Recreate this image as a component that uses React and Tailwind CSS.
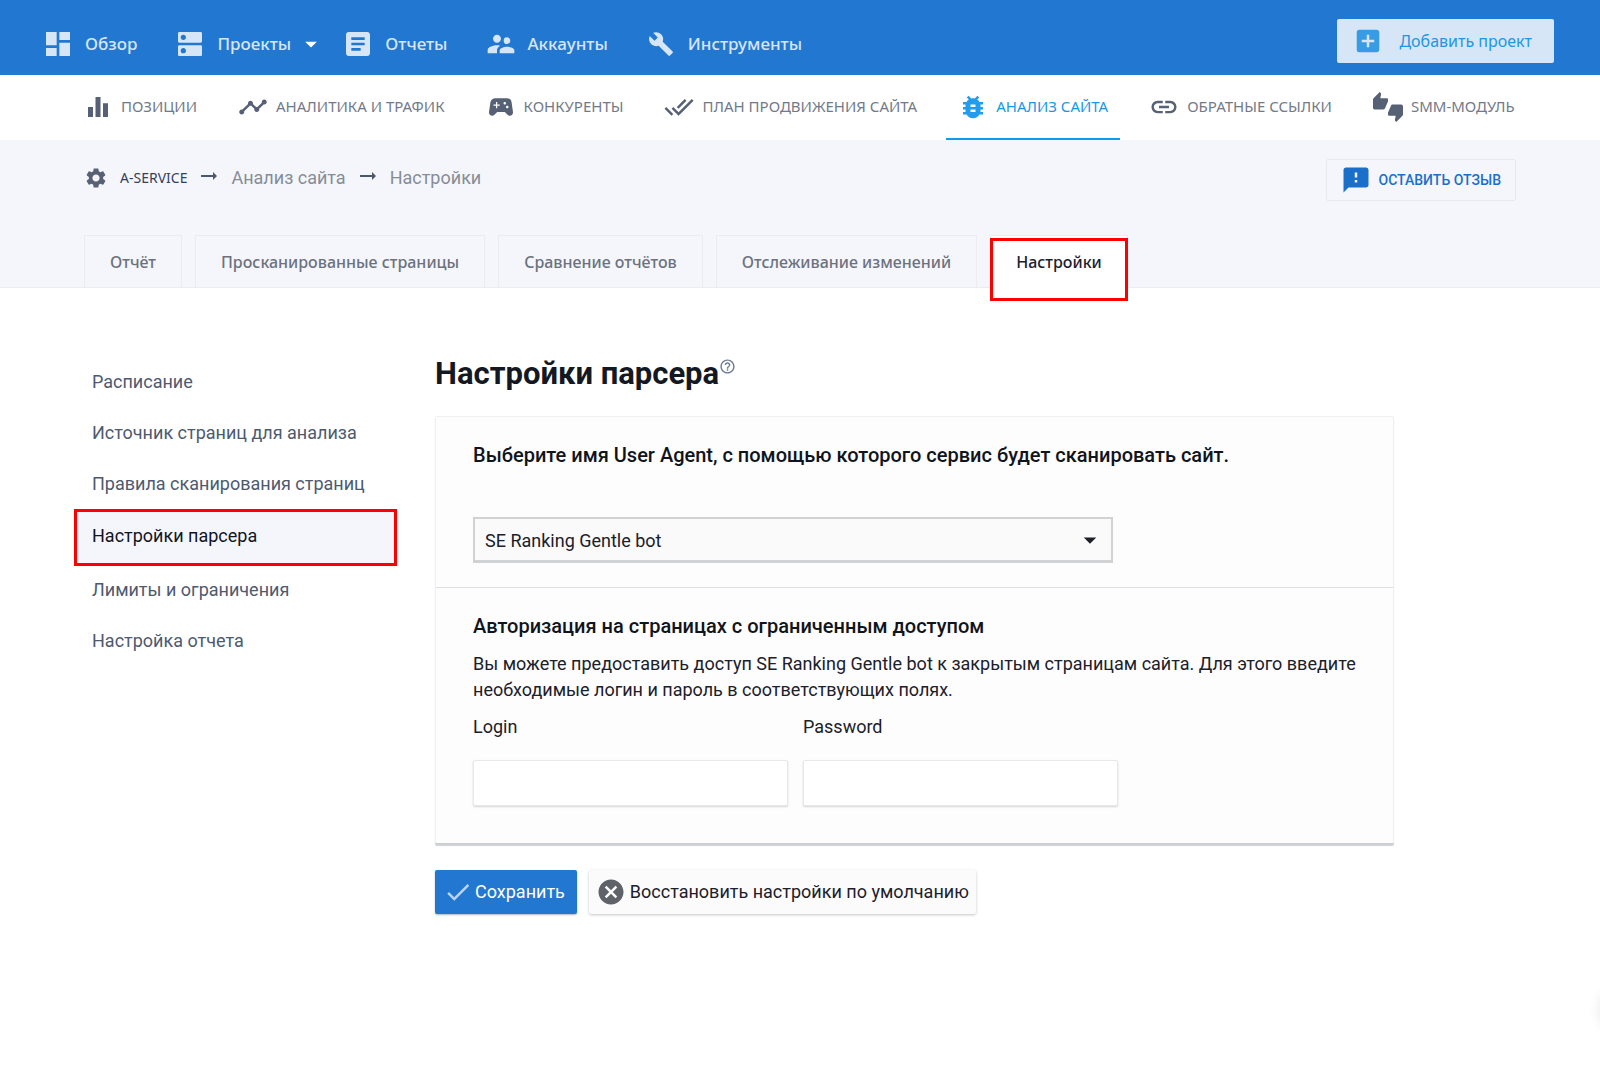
import { useState } from "react";
import {
  MdAddBox,
  MdArrowDropDown,
  MdArrowRightAlt,
  MdArticle,
  MdBugReport,
  MdBuild,
  MdCancel,
  MdDashboard,
  MdDns,
  MdDone,
  MdDoneAll,
  MdEqualizer,
  MdFeedback,
  MdHelpOutline,
  MdLink,
  MdSettings,
  MdSportsEsports,
  MdSupervisorAccount,
  MdThumbsUpDown,
  MdTimeline,
} from "react-icons/md";

const mainLinks = [
  { label: "Обзор", icon: MdDashboard },
  { label: "Проекты", icon: MdDns, dropdown: true },
  { label: "Отчеты", icon: MdArticle },
  { label: "Аккаунты", icon: MdSupervisorAccount },
  { label: "Инструменты", icon: MdBuild, small: true },
];

const sections = [
  { label: "ПОЗИЦИИ", icon: MdEqualizer },
  { label: "АНАЛИТИКА И ТРАФИК", icon: MdTimeline },
  { label: "КОНКУРЕНТЫ", icon: MdSportsEsports },
  { label: "ПЛАН ПРОДВИЖЕНИЯ САЙТА", icon: MdDoneAll },
  { label: "АНАЛИЗ САЙТА", icon: MdBugReport, active: true },
  { label: "ОБРАТНЫЕ ССЫЛКИ", icon: MdLink },
  { label: "SMM-МОДУЛЬ", icon: MdThumbsUpDown },
];

const tabs = [
  "Отчёт",
  "Просканированные страницы",
  "Сравнение отчётов",
  "Отслеживание изменений",
  "Настройки",
];

const menu = [
  "Расписание",
  "Источник страниц для анализа",
  "Правила сканирования страниц",
  "Настройки парсера",
  "Лимиты и ограничения",
  "Настройка отчета",
];

const TopBar = () => (
  <header className="flex h-[75px] items-center justify-between bg-[#2277d0] pt-3 pr-[46px] pl-[42px] font-['Noto_Sans',sans-serif]">
    <nav className="flex items-center gap-[37px]">
      {mainLinks.map(({ label, icon: Icon, dropdown, small }) => (
        <a key={label} href="#" className="flex items-center text-[17px] font-medium text-[#d6e6f7]">
          <Icon className={`mr-[11px] size-8 ${small ? "p-[3px]" : ""}`} />
          {label}
          {dropdown && <MdArrowDropDown className="-mr-5 ml-1.5 size-7 text-white" />}
        </a>
      ))}
    </nav>
    <button className="mb-[6px] flex h-11 items-center gap-4 rounded-xs bg-[#d6e6f6] pr-[22px] pl-4 text-base text-[#2196e3]">
      <MdAddBox className="size-[30px] text-[#379ce3]" />
      Добавить проект
    </button>
  </header>
);

const SectionNav = () => (
  <nav className="flex h-[65px] gap-[17px] bg-white px-[71px] font-['Noto_Sans',sans-serif]">
    {sections.map(({ label, icon: Icon, active }) => (
      <a
        key={label}
        href="#"
        className={`flex items-center gap-2 border-b-2 px-3 text-[15px] whitespace-nowrap ${
          active ? "border-[#0f9aee] text-[#1a97e6]" : "border-transparent text-[#727a8a]"
        }`}
      >
        <Icon className={`size-[30px] ${active ? "text-[#229ceb]" : "text-[#566176]"}`} />
        {label}
      </a>
    ))}
  </nav>
);

const PageHead = ({ tab, onTab }) => (
  <div className="border-b border-[#ececee] bg-[#f5f6fb] px-[84px] pt-[19px]">
    <div className="flex h-[42px] items-center justify-between">
      <div className="flex items-center pb-1 text-lg text-[#868d98]">
        <MdSettings className="mr-3 size-6 text-[#566176]" />
        <a href="#" className="font-['Noto_Sans',sans-serif] text-sm text-[#34415a]">A-SERVICE</a>
        <MdArrowRightAlt className="mx-2.5 mb-1 size-6 text-[#4c586e]" />
        <a href="#">Анализ сайта</a>
        <MdArrowRightAlt className="mx-2.5 mb-1 size-6 text-[#4c586e]" />
        <span>Настройки</span>
      </div>
      <button className="flex h-[42px] items-center gap-2 rounded-xs border border-[#e8e9ed] px-3.5 text-sm font-medium text-[#1a6fcb]">
        <MdFeedback className="size-[30px]" />
        ОСТАВИТЬ ОТЗЫВ
      </button>
    </div>
    <div className="mt-[34px] flex h-[52px] gap-[13px] font-['Noto_Sans',sans-serif]">
      {tabs.map((name) => (
        <button
          key={name}
          onClick={() => onTab(name)}
          className={`relative border border-b-0 border-[#ececee] px-[25px] text-base font-medium ${
            name === tab ? "h-[53px] bg-white text-[#1b2130]" : "h-[52px] text-[#6b727e]"
          }`}
        >
          {name}
          {name === tab && (
            <span className="absolute -inset-x-px top-0.5 -bottom-[13px] border-3 border-[#ff0000]" />
          )}
        </button>
      ))}
    </div>
  </div>
);

const SideMenu = ({ current, onSelect }) => (
  <nav className="w-[323px] shrink-0 text-lg">
    {menu.map((item) => (
      <a
        key={item}
        href="#"
        onClick={() => onSelect(item)}
        className={
          item === current
            ? "-mb-0.5 flex h-[57px] items-center border-3 border-[#ff0000] bg-[#f5f6fb] pb-1 pl-[15px] text-[#10151f]"
            : "flex h-[51px] items-center pl-[18px] text-[#4d5a70]"
        }
      >
        {item}
      </a>
    ))}
  </nav>
);

const ParserForm = () => (
  <form className="max-w-[959px] flex-1 text-[#1b202a]" onSubmit={(e) => e.preventDefault()}>
    <h1 className="flex text-[31px] leading-9 font-bold text-[#141823]">
      Настройки парсера
      <MdHelpOutline className="mt-0.5 size-[17px] text-[#6b7a92]" />
    </h1>

    <div className="mt-6 rounded-xs border border-[#f0f0f1] border-b-[#c9ccd0] bg-[#fdfdfd] shadow-[0_2px_1px_#cfd1d4]">
      <section className="border-b border-[#dcdfe6] px-[37px] pt-6 pb-6">
        <label htmlFor="agent" className="block text-xl leading-7 font-medium text-[#10141c]">
          Выберите имя User Agent, с помощью которого сервис будет сканировать сайт.
        </label>
        <div className="relative mt-12 w-[640px]">
          <select
            id="agent"
            className="h-[46px] w-full appearance-none border-2 border-[#d0d2d3] border-b-3 bg-[#fafafa] px-2.5 pt-[3px] text-lg"
          >
            <option>SE Ranking Gentle bot</option>
          </select>
          <MdArrowDropDown className="pointer-events-none absolute top-2 right-2 size-[30px]" />
        </div>
      </section>

      <section className="px-[37px] pt-6 pb-[37px]">
        <h2 className="text-xl leading-7 font-medium text-[#10141c]">
          Авторизация на страницах с ограниченным доступом
        </h2>
        <p className="mt-[11px] text-lg leading-[26px]">
          Вы можете предоставить доступ SE Ranking Gentle bot к закрытым страницам сайта. Для этого введите
          необходимые логин и пароль в соответствующих полях.
        </p>
        <div className="mt-[11px] flex gap-[15px] text-lg leading-[26px]">
          <div className="w-[315px]">
            <label htmlFor="login">Login</label>
            <input
              id="login"
              type="text"
              className="mt-5 block h-[46px] w-full rounded-xs border border-[#e8e8ea] bg-white px-3 shadow-[0_1px_2px_#d4d4d6]"
            />
          </div>
          <div className="w-[315px]">
            <label htmlFor="password">Password</label>
            <input
              id="password"
              type="password"
              className="mt-5 block h-[46px] w-full rounded-xs border border-[#e8e8ea] bg-white px-3 shadow-[0_1px_2px_#d4d4d6]"
            />
          </div>
        </div>
      </section>
    </div>

    <div className="mt-[26px] flex gap-3 text-lg">
      <button
        type="submit"
        className="flex h-11 items-center gap-0.5 rounded-xs bg-[#2277d0] pr-3 pl-2 text-white shadow-[0_1px_2px_#a9b8c9]"
      >
        <MdDone className="size-[30px] text-[#b9d4f2]" />
        Сохранить
      </button>
      <button
        type="button"
        className="flex h-11 items-center gap-1 rounded-xs bg-[#fbfbfb] px-[7px] shadow-[0_1px_3px_#c4c6c9]"
      >
        <MdCancel className="size-[30px] text-[#5f6369]" />
        Восстановить настройки по умолчанию
      </button>
    </div>
  </form>
);

const App = () => {
  const [tab, setTab] = useState("Настройки");
  const [item, setItem] = useState("Настройки парсера");

  return (
    <div className="min-h-screen bg-white font-['Roboto',sans-serif]">
      <TopBar />
      <SectionNav />
      <PageHead tab={tab} onTab={setTab} />
      <main className="flex items-start gap-[38px] px-[74px] pt-[68px] pb-12">
        <SideMenu current={item} onSelect={setItem} />
        <ParserForm />
      </main>
      {/* edge of the collapsed chat widget */}
      <div className="fixed -right-10 bottom-[50px] size-10 rounded-full shadow-[0_0_14px_#e6e6e6]" />
    </div>
  );
};

export default App;
